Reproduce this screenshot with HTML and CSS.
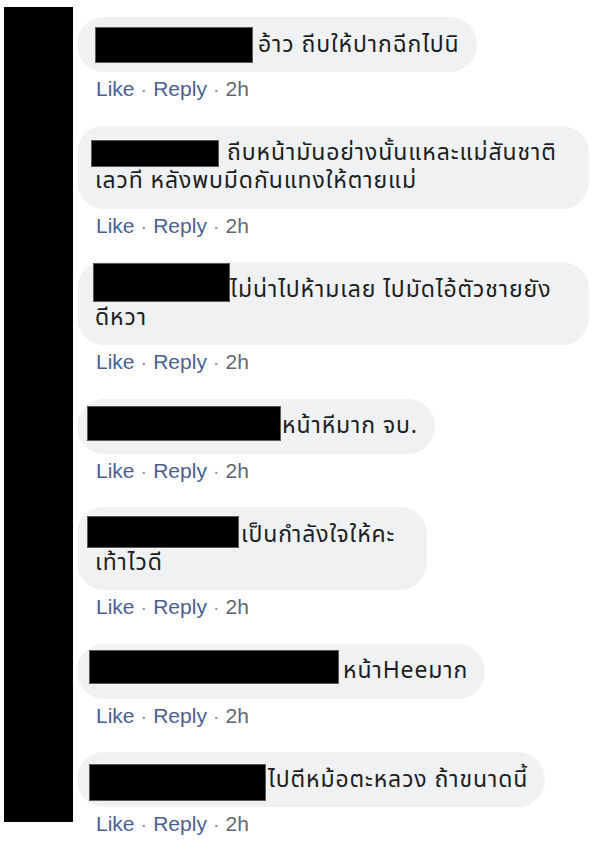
FILE: index.html
```html
<!DOCTYPE html>
<html lang="th">
<head>
<meta charset="utf-8">
<title>Comments</title>
<link rel="stylesheet" href="styles.css">
</head>
<body>
<div class="page">
  <div class="bar"></div>
  <div class="thread">
    <div class="comment">
      <div class="bubble"><span class="redact r1"></span>อ้าว ถีบให้ปากฉีกไปนิ</div>
      <div class="actions"><span class="link">Like</span><span class="sep"> · </span><span class="link">Reply</span><span class="sep"> · </span><span class="time">2h</span></div>
    </div>
    <div class="comment">
      <div class="bubble bubble-full"><span class="redact r2"></span>ถีบหน้ามันอย่างนั้นแหละแม่สันชาติ<br>เลวที หลังพบมีดกันแทงให้ตายแม่</div>
      <div class="actions"><span class="link">Like</span><span class="sep"> · </span><span class="link">Reply</span><span class="sep"> · </span><span class="time">2h</span></div>
    </div>
    <div class="comment">
      <div class="bubble bubble-full"><span class="redact r3"></span>ไม่น่าไปห้ามเลย ไปมัดไอ้ตัวชายยัง<br>ดีหวา</div>
      <div class="actions"><span class="link">Like</span><span class="sep"> · </span><span class="link">Reply</span><span class="sep"> · </span><span class="time">2h</span></div>
    </div>
    <div class="comment">
      <div class="bubble"><span class="redact r4"></span>หน้าหีมาก จบ.</div>
      <div class="actions"><span class="link">Like</span><span class="sep"> · </span><span class="link">Reply</span><span class="sep"> · </span><span class="time">2h</span></div>
    </div>
    <div class="comment">
      <div class="bubble bubble-loose"><span class="redact r5"></span>เป็นกำลังใจให้คะ<br>เท้าไวดี</div>
      <div class="actions"><span class="link">Like</span><span class="sep"> · </span><span class="link">Reply</span><span class="sep"> · </span><span class="time">2h</span></div>
    </div>
    <div class="comment">
      <div class="bubble"><span class="redact r6"></span>หน้าHeeมาก</div>
      <div class="actions"><span class="link">Like</span><span class="sep"> · </span><span class="link">Reply</span><span class="sep"> · </span><span class="time">2h</span></div>
    </div>
    <div class="comment">
      <div class="bubble"><span class="redact r7"></span>ไปตีหม้อตะหลวง ถ้าขนาดนี้</div>
      <div class="actions"><span class="link">Like</span><span class="sep"> · </span><span class="link">Reply</span><span class="sep"> · </span><span class="time">2h</span></div>
    </div>
  </div>
</div>
</body>
</html>
```
FILE: styles.css
```css
html, body {
  margin: 0;
  padding: 0;
  background: #ffffff;
}

.page {
  display: flex;
  align-items: flex-start;
}

.bar {
  flex: 0 0 69px;
  height: 815px;
  margin: 7px 0 0 4px;
  background: #000000;
}

.thread {
  display: flex;
  flex-direction: column;
  align-items: flex-start;
  margin-left: 4px;
  padding-top: 17px;
}

.comment {
  display: flex;
  flex-direction: column;
  align-items: flex-start;
}

.bubble {
  box-sizing: border-box;
  background: #f0f1f3;
  border-radius: 27px;
  padding: 13.5px 17px 13.5px 18px;
  font-family: Tahoma, "Leelawadee UI", "Noto Sans Thai", Loma, Garuda, "Liberation Sans", sans-serif;
  font-size: 23px;
  letter-spacing: 0.9px;
  line-height: 28px;
  color: #1c1e21;
  white-space: nowrap;
}

.bubble-full {
  width: 512px;
}

.bubble-loose {
  padding-right: 32px;
}

.redact {
  display: inline-block;
  vertical-align: middle;
  background: #000000;
  box-shadow: 0 0 0 1px #5a5a5a;
  width: var(--w);
  height: var(--h);
  margin-top: calc((var(--h) + 2 * var(--dy)) / -2);
  margin-bottom: calc((var(--h) - 2 * var(--dy)) / -2);
}

.r1 { --w: 156px; --h: 34px; --dy: 0px; margin-left: 1px; margin-right: 6px; }
.r2 { --w: 126px; --h: 25px; --dy: 0px; margin-left: -3px; margin-right: 9px; }
.r3 { --w: 135px; --h: 37px; --dy: 8px; margin-left: -1px; margin-right: 1px; }
.r4 { --w: 192px; --h: 33px; --dy: 3px; margin-left: -7px; margin-right: 2px; }
.r5 { --w: 150px; --h: 30px; --dy: 3.5px; margin-left: -7px; margin-right: 3px; }
.r6 { --w: 248px; --h: 32px; --dy: 4.5px; margin-left: -5px; margin-right: 5px; }
.r7 { --w: 175px; --h: 35px; --dy: -2px; margin-left: -5px; margin-right: 3px; }

.actions {
  margin: 5px 0 24.5px 19px;
  font-family: "Liberation Sans", Arial, sans-serif;
  font-size: 21px;
  line-height: 24px;
  white-space: pre;
}

.link {
  color: #4b5f93;
}

.sep {
  color: #90949c;
}

.time {
  color: #616770;
}
```
